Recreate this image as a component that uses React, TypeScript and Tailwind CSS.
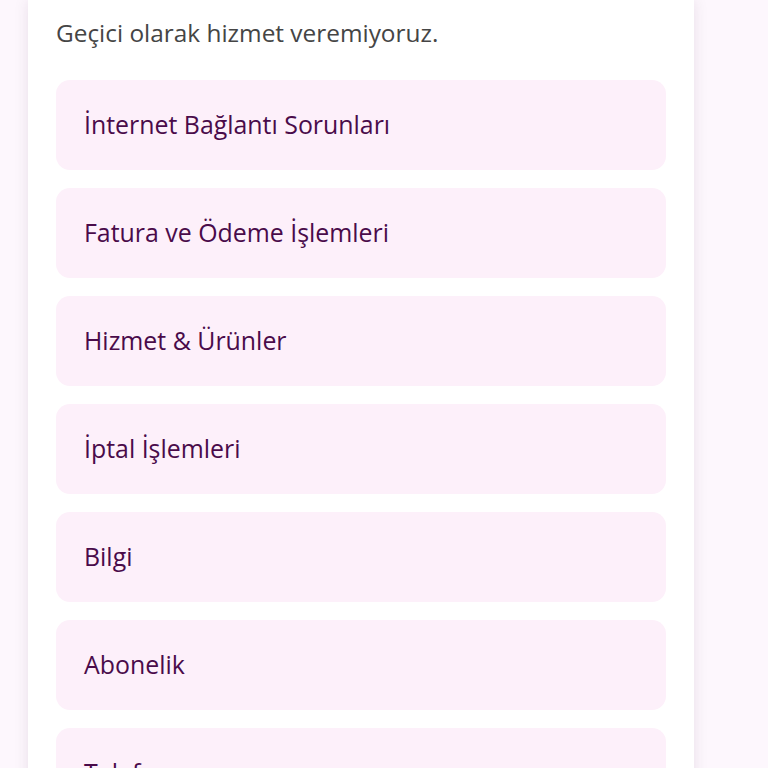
import React from 'react'

const topics = [
  'İnternet Bağlantı Sorunları',
  'Fatura ve Ödeme İşlemleri',
  'Hizmet & Ürünler',
  'İptal İşlemleri',
  'Bilgi',
  'Abonelik',
  'Telefon',
]

const App = () => {
  return (
    <div className="min-h-[768px] h-[768px] overflow-hidden bg-[#fdf7fd] font-['Open_Sans',sans-serif]">
      <div className="ml-[28px] w-[666px] bg-white pt-[15px] px-[28px] pb-10 shadow-[0_0_14px_rgba(60,20,60,0.10)]">
        <p className="text-[24.4px] leading-[36px] text-[#454545]">Geçici olarak hizmet veremiyoruz.</p>
        <div className="mt-[29px] flex flex-col gap-[18px]">
          {topics.map((t) => (
            <div
              key={t}
              className="h-[90px] rounded-[14px] bg-[#fdf0fa] px-[28px] flex items-center text-[24.9px] text-[#4a0b4a]"
            >
              {t}
            </div>
          ))}
        </div>
      </div>
    </div>
  )
}

export default App
